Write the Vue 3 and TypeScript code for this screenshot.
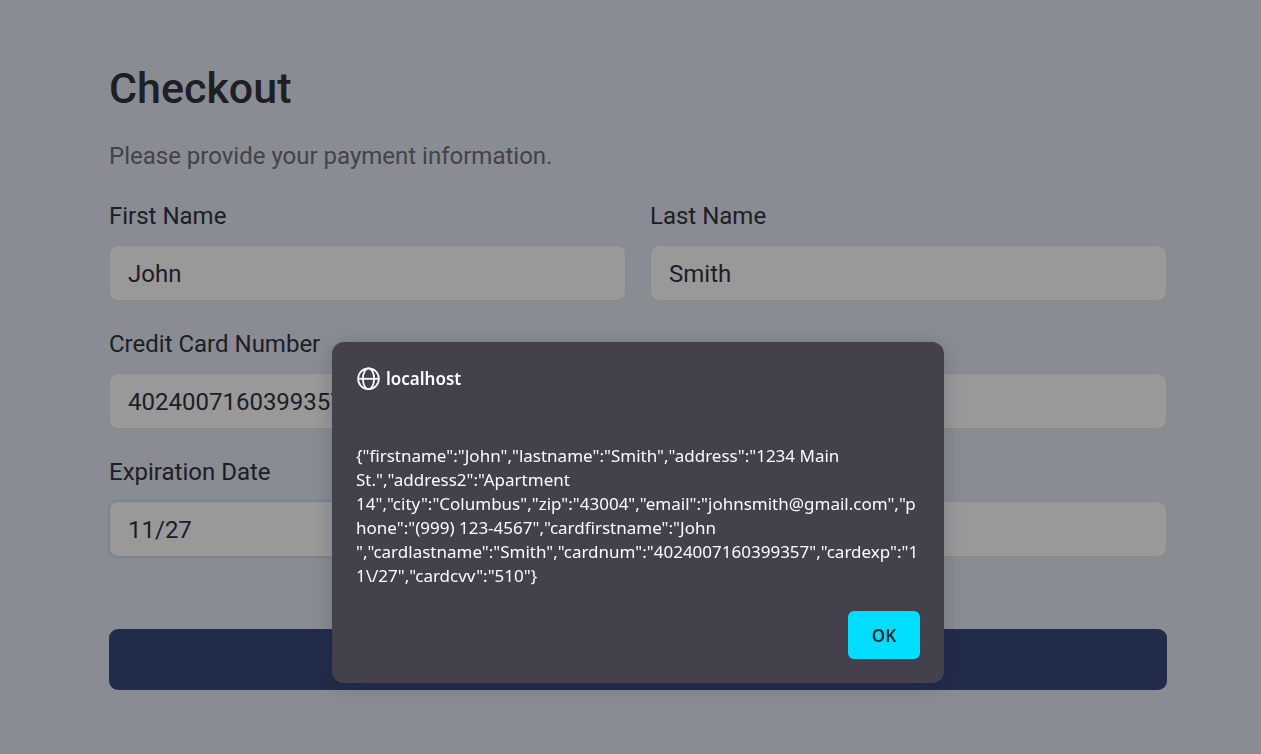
<script setup lang="ts">
import { ref } from 'vue'

const firstName = ref('John')
const lastName = ref('Smith')
const cardNumber = ref('4024007160399357')
const expiration = ref('11/27')
const securityCode = ref('')
const dialogOpen = ref(true)

const messageLines: string[] = [
  '{"firstname":"John","lastname":"Smith","address":"1234 Main',
  'St.","address2":"Apartment',
  '14","city":"Columbus","zip":"43004","email":"johnsmith@gmail.com","p',
  'hone":"(999) 123-4567","cardfirstname":"John',
  '","cardlastname":"Smith","cardnum":"4024007160399357","cardexp":"1',
  '1\\/27","cardcvv":"510"}',
]
</script>

<template>
  <div class="page">
    <main class="checkout">
      <h1 class="title">Checkout</h1>
      <p class="lead">Please provide your payment information.</p>
      <form @submit.prevent="dialogOpen = true">
        <div class="fields">
          <div class="field">
            <label for="first-name">First Name</label>
            <input id="first-name" v-model="firstName" type="text" />
          </div>
          <div class="field">
            <label for="last-name">Last Name</label>
            <input id="last-name" v-model="lastName" type="text" />
          </div>
          <div class="field wide">
            <label for="card-number">Credit Card Number</label>
            <input id="card-number" v-model="cardNumber" type="text" />
          </div>
          <div class="field">
            <label for="expiration">Expiration Date</label>
            <input id="expiration" v-model="expiration" class="active" type="text" />
          </div>
          <div class="field">
            <input v-model="securityCode" type="text" aria-label="Security code" />
          </div>
        </div>
        <button class="submit" type="submit" aria-label="Submit payment"></button>
      </form>
    </main>

    <div v-if="dialogOpen" class="backdrop">
      <section class="dialog" role="alertdialog" aria-modal="true" aria-labelledby="dialog-host" aria-describedby="dialog-message">
        <header class="host">
          <svg class="globe" viewBox="0 0 24 24" fill="none" stroke="currentColor" stroke-width="1.8" aria-hidden="true">
            <circle cx="12.5" cy="11.8" r="10.4" />
            <ellipse cx="12.5" cy="11.8" rx="5.6" ry="10.4" />
            <path d="M2.1 11.8h20.8" />
          </svg>
          <span id="dialog-host">localhost</span>
        </header>
        <p id="dialog-message" class="message">
          <span v-for="line in messageLines" :key="line" class="line">{{ line }}</span>
        </p>
        <footer class="actions">
          <button class="ok" type="button" @click="dialogOpen = false">OK</button>
        </footer>
      </section>
    </div>
  </div>
</template>

<style>
body {
  margin: 0;
  background: #e5eaf5;
}
</style>

<style scoped>
.page {
  box-sizing: border-box;
  min-height: 100vh;
  padding: 62px 94px 64px 109px;
  background: #e5eaf5;
  color: #33353f;
  font-family: Roboto, "Liberation Sans", sans-serif;
  font-size: 24px;
  line-height: 36px;
}

.title {
  margin: 0 0 24px;
  font-size: 43px;
  font-weight: 500;
  line-height: 52px;
}

.lead {
  margin: 0 0 24px;
  color: #717176;
}

.fields {
  display: grid;
  grid-template-columns: 1fr 1fr;
  gap: 25px 24px;
}

.field {
  display: flex;
  flex-direction: column;
  justify-content: flex-end;
  gap: 11px;
  min-width: 0;
}

.wide {
  grid-column: 1 / -1;
}

.field input {
  box-sizing: border-box;
  width: 100%;
  height: 56px;
  padding: 2px 18px 0;
  border: 1px solid #e4e4e8;
  border-radius: 9px;
  outline: none;
  background: #fff;
  color: inherit;
  font: inherit;
}

.field input.active {
  border-color: #ced9ea;
  box-shadow: 0 0 0 2px #d8e1ef;
}

.submit {
  display: block;
  width: 100%;
  height: 61px;
  margin-top: 72px;
  border: 0;
  border-radius: 9px;
  background: #394a7d;
}

.backdrop {
  position: fixed;
  inset: 0;
  display: flex;
  align-items: flex-start;
  justify-content: center;
  padding: 342px 0 0 15px;
  background: rgba(0, 0, 0, 0.4);
}

.dialog {
  box-sizing: border-box;
  width: 612px;
  max-width: 100%;
  padding: 24px;
  border-radius: 12px;
  background: #44414d;
  box-shadow: 0 3px 21px rgba(20, 28, 36, 0.22);
  color: #fbfbfe;
  font-family: "Noto Sans", "Open Sans", sans-serif;
  font-size: 17px;
  line-height: 24px;
}

.host {
  display: flex;
  align-items: center;
  gap: 6px;
  height: 26px;
  font-weight: 600;
}

.globe {
  width: 24px;
  height: 24px;
}

.message {
  margin: 52px 0 23px;
}

.line {
  display: block;
  white-space: pre;
}

.actions {
  display: flex;
  justify-content: flex-end;
}

.ok {
  min-width: 72px;
  height: 48px;
  padding: 2px 20px 0;
  border: 0;
  border-radius: 6px;
  background: #00ddff;
  color: #2b2a33;
  font: inherit;
  font-weight: 600;
}
</style>
